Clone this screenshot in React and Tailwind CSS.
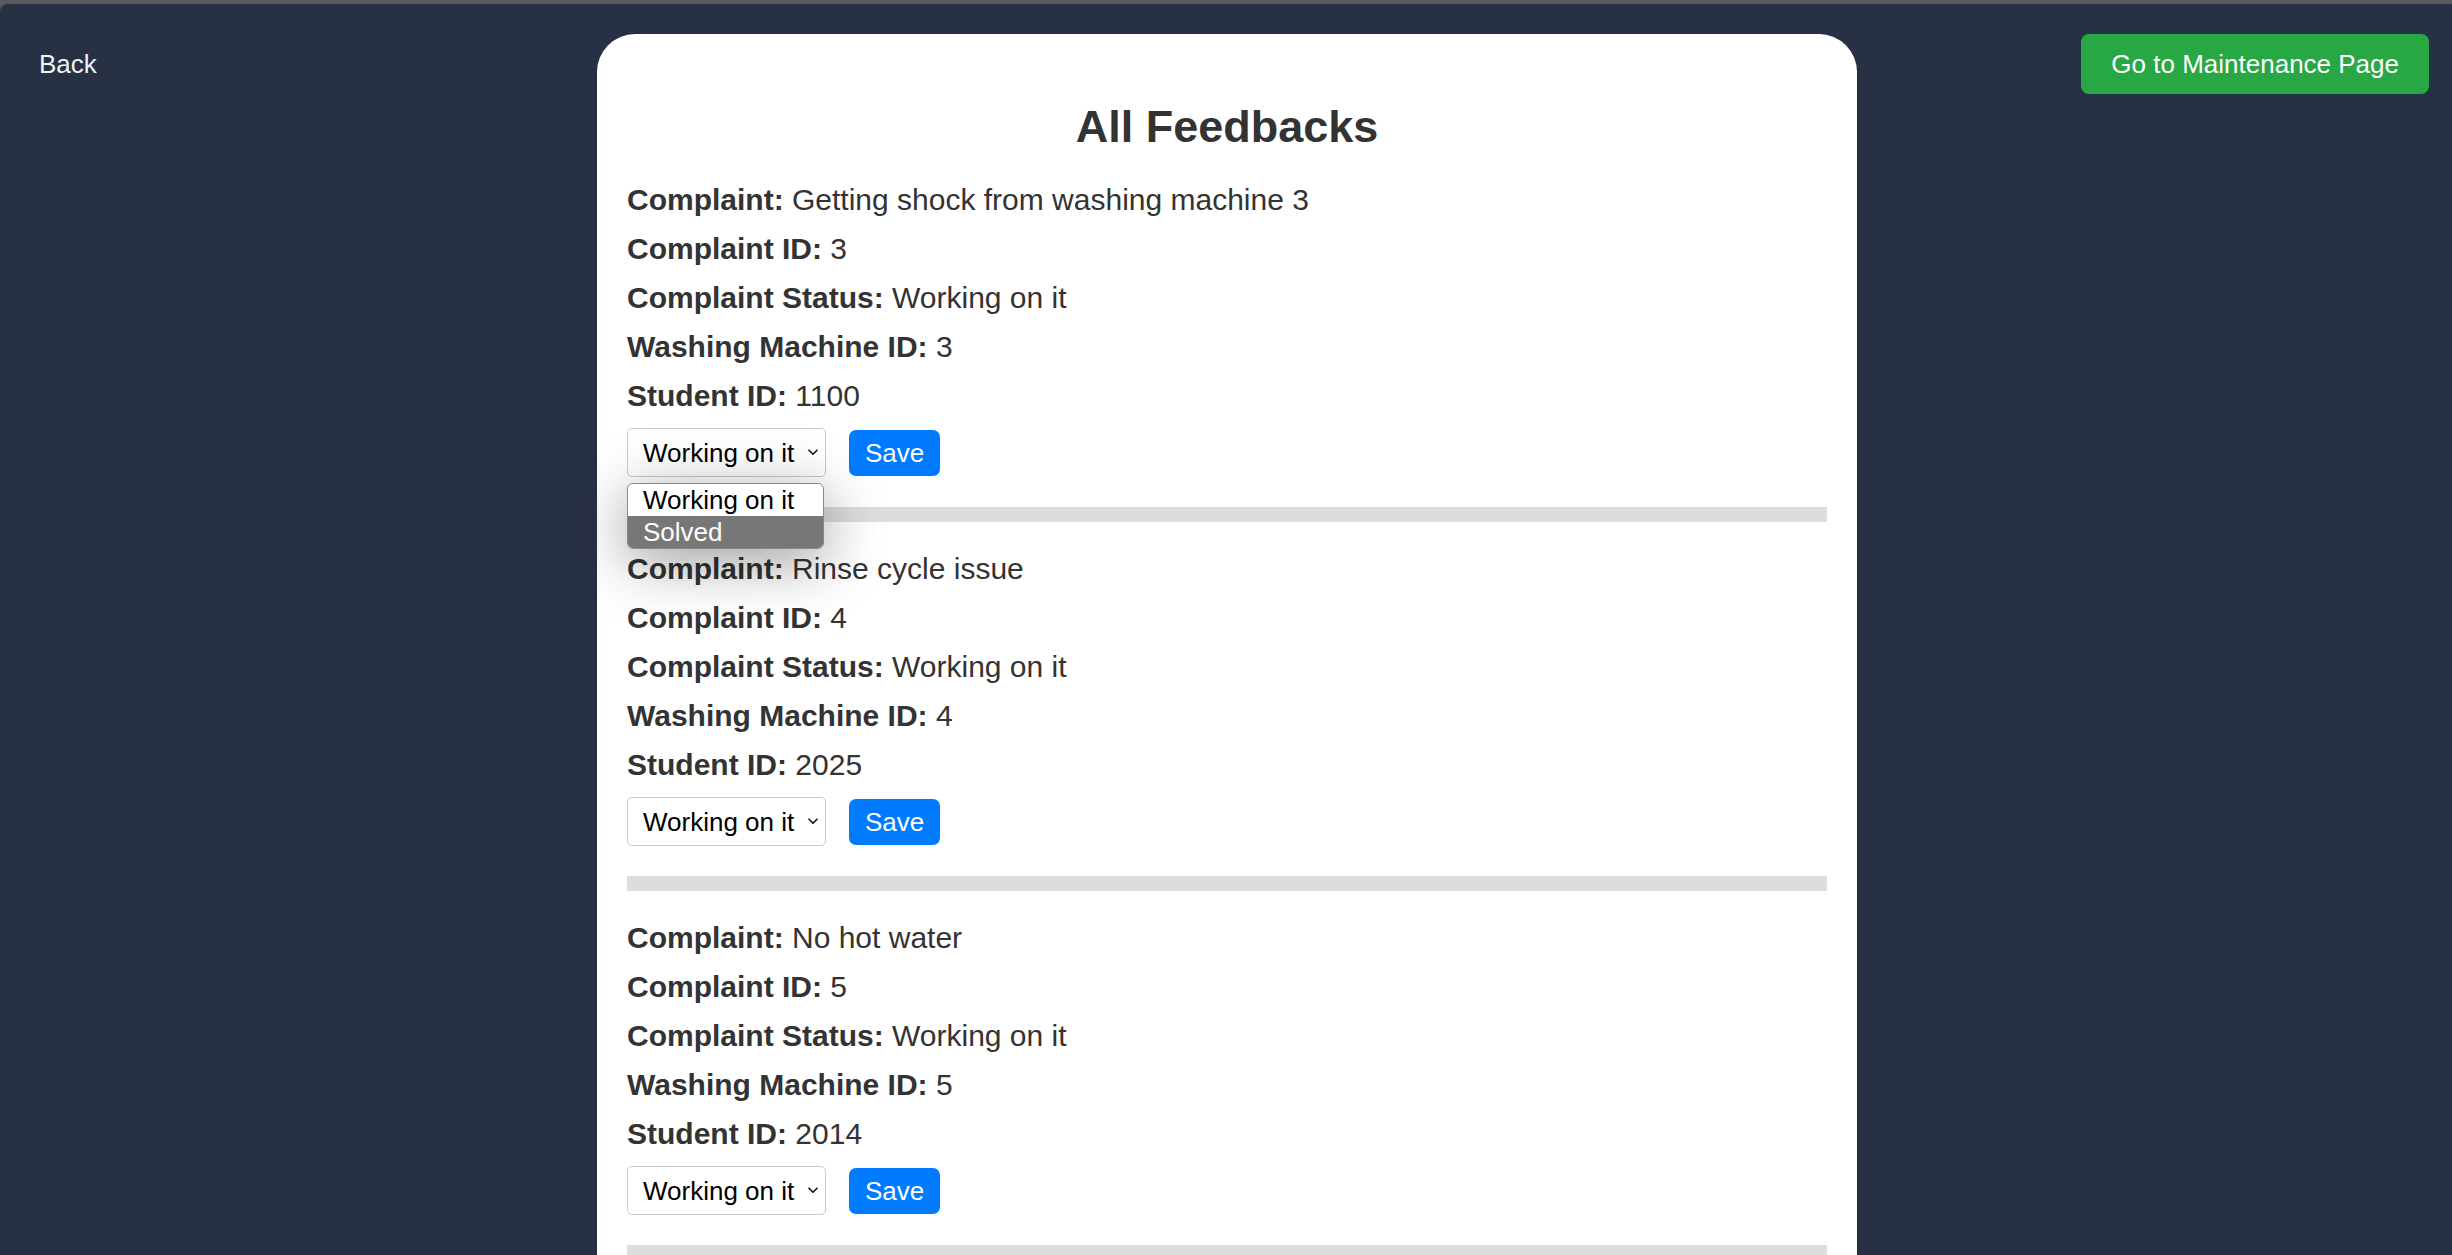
import React from "react";

const items = [
  { complaint: "Getting shock from washing machine 3", id: 3, status: "Working on it", machine: 3, student: 1100, open: true },
  { complaint: "Rinse cycle issue", id: 4, status: "Working on it", machine: 4, student: 2025 },
  { complaint: "No hot water", id: 5, status: "Working on it", machine: 5, student: 2014 },
];

function Chevron() {
  return (
    <svg width="10" height="7" viewBox="0 0 10 7" className="shrink-0">
      <path d="M1 1.2 L5 5.2 L9 1.2" fill="none" stroke="#111" strokeWidth="1.6" strokeLinecap="round" strokeLinejoin="round" />
    </svg>
  );
}

function Select({ open }) {
  return (
    <div className="relative">
      <div className="flex h-[49px] w-[199px] items-center justify-between rounded-[5px] border border-[#c9c9c9] bg-white pl-[15px] pr-[7px] text-[26px] leading-[30px] text-black">
        <span>Working on it</span>
        <Chevron />
      </div>
      {open && (
        <div className="absolute left-0 top-[55px] z-10 w-[197px] overflow-hidden rounded-[6px] border border-[#8a8a8a] bg-white shadow-[0_12px_60px_rgba(0,0,0,0.4)]">
          <div className="h-[32px] pl-[15px] text-[26px] leading-[32px] text-black">Working on it</div>
          <div className="h-[32px] bg-[#777777] pl-[15px] text-[26px] leading-[32px] text-white">Solved</div>
        </div>
      )}
    </div>
  );
}

function Item({ it }) {
  return (
    <div className="pb-[30px]">
      <div className="flex flex-col gap-[15px] text-[30px] leading-[34px] text-[#333333]">
        <p><span className="font-bold">Complaint:</span> {it.complaint}</p>
        <p><span className="font-bold">Complaint ID:</span> {it.id}</p>
        <p><span className="font-bold">Complaint Status:</span> {it.status}</p>
        <p><span className="font-bold">Washing Machine ID:</span> {it.machine}</p>
        <p><span className="font-bold">Student ID:</span> {it.student}</p>
      </div>
      <div className="mt-[15px] flex h-[49px] items-center gap-[23px]">
        <Select open={it.open} />
        <button className="h-[46px] rounded-[7px] bg-[#007bff] px-[16px] text-[26px] leading-[30px] text-white">
          Save
        </button>
      </div>
      <div className="mt-[30px] h-[15px] bg-[#dddddd]" />
    </div>
  );
}

export default function App() {
  return (
    <div className="h-[1255px] w-[2452px] overflow-hidden bg-[#58595c] font-['Liberation_Sans',Arial,sans-serif]">
      <div className="h-[4px]" />
      <div className="grid h-[1251px] grid-cols-[597px_1260px_1fr] rounded-tl-[8px] bg-[#283044]">
        <div className="pl-[39px] pt-[45px]">
          <button className="text-[26px] leading-[30px] text-[#eef2f7]">Back</button>
        </div>
        <div className="mt-[30px] rounded-t-[38px] bg-white px-[30px] pt-[67px]">
          <h2 className="mb-[30px] text-center text-[45px] font-bold leading-[52px] text-[#333333]">All Feedbacks</h2>
          {items.map((it) => (
            <Item key={it.id} it={it} />
          ))}
        </div>
        <div className="flex items-start justify-end pr-[23px] pt-[30px]">
          <button className="h-[60px] rounded-[8px] bg-[#28a745] px-[30px] text-[26px] leading-[30px] text-white">
            Go to Maintenance Page
          </button>
        </div>
      </div>
    </div>
  );
}
